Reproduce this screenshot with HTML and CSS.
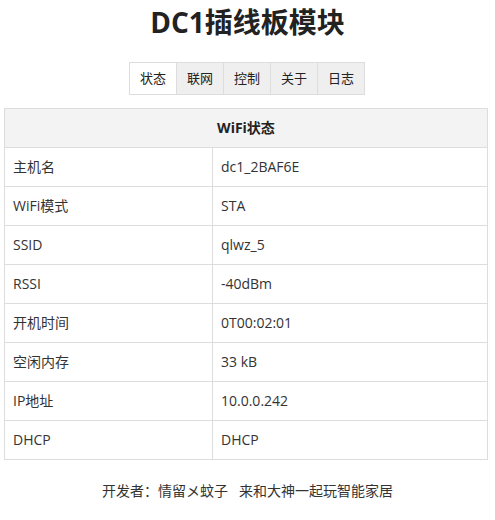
FILE: index.html
```html
<!DOCTYPE html>
<html lang="zh">
<head>
<meta charset="utf-8">
<title>DC1插线板模块</title>
<link rel="stylesheet" href="styles.css">
</head>
<body>
<h1 class="title">DC1插线板模块</h1>
<nav class="tabs">
  <a class="tab active">状态</a>
  <a class="tab">联网</a>
  <a class="tab">控制</a>
  <a class="tab">关于</a>
  <a class="tab">日志</a>
</nav>
<table class="status">
  <colgroup>
    <col class="key-col">
    <col>
  </colgroup>
  <thead>
    <tr><th colspan="2">WiFi状态</th></tr>
  </thead>
  <tbody>
    <tr><td>主机名</td><td>dc1_2BAF6E</td></tr>
    <tr><td>WiFi模式</td><td>STA</td></tr>
    <tr><td>SSID</td><td>qlwz_5</td></tr>
    <tr><td>RSSI</td><td>-40dBm</td></tr>
    <tr><td>开机时间</td><td>0T00:02:01</td></tr>
    <tr><td>空闲内存</td><td>33 kB</td></tr>
    <tr><td>IP地址</td><td>10.0.0.242</td></tr>
    <tr><td>DHCP</td><td>DHCP</td></tr>
  </tbody>
</table>
<p class="footer">开发者：情留メ蚊子&nbsp;&nbsp;&nbsp;来和大神一起玩智能家居</p>
</body>
</html>
```
FILE: styles.css
```css
body {
  margin: 0;
  background: #fff;
  color: #333;
  font-family: "Open Sans", "Noto Sans CJK SC", sans-serif;
  font-size: 14px;
}
.title {
  margin: 2px 0 0;
  font-size: 28px;
  line-height: 40px;
  font-weight: 700;
  text-align: center;
  color: #222;
}
.tabs {
  display: flex;
  justify-content: center;
  margin-top: 20px;
}
.tab {
  width: 46px;
  height: 31px;
  line-height: 31px;
  text-align: center;
  font-size: 13px;
  color: #222;
  background: #efefef;
  border: 1px solid #ddd;
  margin-left: -1px;
}
.tab.active {
  background: #fff;
}
.status {
  width: 484px;
  margin: 13px 0 0 4px;
  border-collapse: collapse;
  table-layout: fixed;
}
.key-col {
  width: 208px;
}
.status th,
.status td {
  border: 1px solid #ddd;
  padding: 9px 8px;
  line-height: 20px;
  text-align: left;
  font-weight: 400;
}
.status th {
  background: #f3f3f3;
  text-align: center;
  font-weight: 700;
  color: #222;
}
.footer {
  margin: 21px 0 0;
  text-align: center;
  line-height: 20px;
}
```
